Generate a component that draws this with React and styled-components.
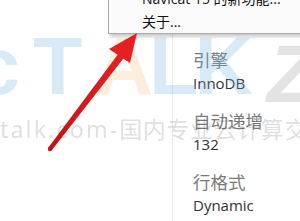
import styled, { createGlobalStyle } from "styled-components";

const Global = createGlobalStyle`
  html, body {
    margin: 0;
    padding: 0;
    background: #ffffff;
  }
`;

const Screen = styled.div`
  position: relative;
  width: 300px;
  height: 221px;
  overflow: hidden;
  display: flex;
  background: #ffffff;
`;

const Blank = styled.div`
  width: 172px;
  flex-shrink: 0;
`;

const InfoPanel = styled.div`
  flex: 1;
  border-left: 1px solid #e8e8e8;
  padding: 51px 0 0 20px;
  display: flex;
  flex-direction: column;
  gap: 21.5px;
`;

const Field = styled.div`
  display: flex;
  flex-direction: column;
  gap: 7px;
`;

const Label = styled.div`
  font-family: "Noto Sans CJK SC", sans-serif;
  font-size: 17.5px;
  line-height: 17.5px;
  color: #7a7a7a;
  white-space: nowrap;
`;

const Value = styled.div`
  font-family: "Open Sans", "Noto Sans", sans-serif;
  font-size: 15px;
  line-height: 15px;
  color: #333333;
  white-space: nowrap;
`;

/* faint site watermark lying over the whole shot */
const Watermark = styled.div`
  position: absolute;
  inset: 0;
  pointer-events: none;
  display: flex;
  flex-direction: column;
  padding-top: 26px;
  gap: 13px;
`;

const LetterRow = styled.div`
  display: flex;
  align-items: flex-start;
  margin-left: -25px;
`;

const BigLetter = styled.span`
  font-family: "Liberation Sans", Arial, sans-serif;
  font-weight: bold;
  font-size: 81px;
  line-height: 81px;
  height: 81px;
  margin-right: ${(p) => p.$after || 0}px;
  margin-top: ${(p) => p.$drop || 0}px;
  color: ${(p) => p.$color};
  font-style: ${(p) => (p.$italic ? "italic" : "normal")};
  flex-shrink: 0;
`;

const MarkLine = styled.div`
  margin-top: -13px;
  font-family: "Noto Sans", "Noto Sans CJK SC", sans-serif;
  font-size: 23px;
  line-height: 28px;
  letter-spacing: 0.6px;
  color: rgba(0, 0, 0, 0.15);
  white-space: nowrap;
`;

const MarkLatin = styled.span`
  letter-spacing: 2.2px;
`;

const Menu = styled.div`
  position: absolute;
  left: 108px;
  top: -14px;
  width: 230px;
  background: #fbfbfb;
  border: 1px solid #a9a9a9;
  box-shadow: 2px 3px 3px rgba(0, 0, 0, 0.2);
  z-index: 3;
`;

const MenuItem = styled.div`
  height: 23px;
  padding-left: 33px;
  font-family: "Open Sans", "Noto Sans CJK SC", sans-serif;
  font-size: 14px;
  line-height: 23px;
  color: #111111;
  white-space: nowrap;
`;

const Arrow = styled.svg`
  position: absolute;
  left: 0;
  top: 0;
  z-index: 4;
`;

const fields = [
  ["引擎", "InnoDB"],
  ["自动递增", "132"],
  ["行格式", "Dynamic"],
];

const blue = "rgba(110, 175, 225, 0.26)";

export default function App() {
  return (
    <>
      <Global />
      <Screen>
        <Blank />
        <InfoPanel>
          {fields.map(([label, value]) => (
            <Field key={label}>
              <Label>{label}</Label>
              <Value>{value}</Value>
            </Field>
          ))}
        </InfoPanel>

        <Watermark>
          <LetterRow>
            <BigLetter $color={blue} $after={13}>c</BigLetter>
            <BigLetter $color={blue} $after={12}>T</BigLetter>
            <BigLetter $color="rgba(245, 190, 130, 0.28)" $after={-4}>A</BigLetter>
            <BigLetter $color={blue} $after={-4}>L</BigLetter>
            <BigLetter $color={blue} $after={14}>K</BigLetter>
            <BigLetter $color="rgba(0, 0, 0, 0.11)" $drop={8} $italic>Z</BigLetter>
          </LetterRow>
          <MarkLine>
            <MarkLatin>talk.com-</MarkLatin>国内专业云计算交流
          </MarkLine>
        </Watermark>

        <Menu>
          <MenuItem>Navicat 15 的新功能...</MenuItem>
          <MenuItem>关于...</MenuItem>
        </Menu>

        <Arrow width="300" height="221" viewBox="0 0 300 221">
          <defs>
            <linearGradient id="shaft" x1="0" y1="1" x2="1" y2="0">
              <stop offset="0" stopColor="#c41212" />
              <stop offset="1" stopColor="#e52222" />
            </linearGradient>
          </defs>
          <polygon
            points="51.8,150.3 48.2,147.7 118.2,53.9 123.8,58.1"
            fill="url(#shaft)"
          />
          <circle cx="50" cy="149" r="2.2" fill="#c41212" />
          <polygon points="137,33 109,49 130,63" fill="#e62020" />
        </Arrow>
      </Screen>
    </>
  );
}
